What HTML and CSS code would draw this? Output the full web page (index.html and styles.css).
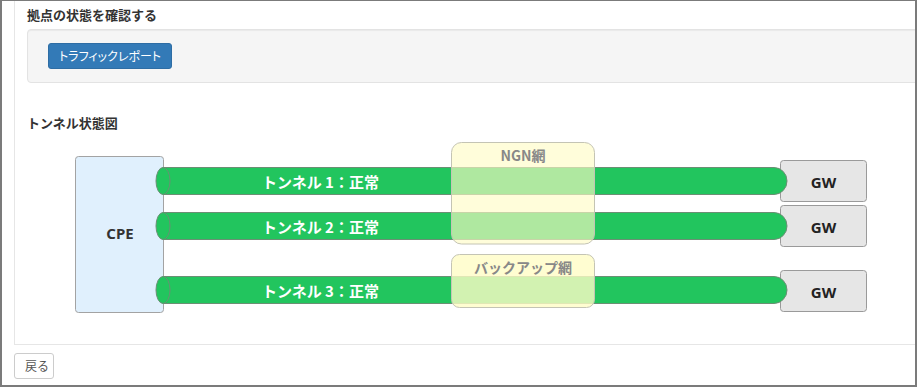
FILE: index.html
```html
<!DOCTYPE html>
<html lang="ja">
<head>
<meta charset="utf-8">
<title>拠点の状態を確認する</title>
<link rel="stylesheet" href="styles.css">
</head>
<body>
<div class="frame">
  <div class="panel">
    <h2 class="title">拠点の状態を確認する</h2>
    <div class="well">
      <button class="btn btn-primary">トラフィックレポート</button>
    </div>
    <h2 class="title title-diagram">トンネル状態図</h2>
    <svg class="diagram" viewBox="27 133 880 211" width="880" height="211" xmlns="http://www.w3.org/2000/svg">
      <rect class="cpe" x="75.5" y="156.5" width="88" height="156" rx="3"/>
      <text class="node-label" x="120" y="233">CPE</text>

      <rect class="gw" x="780.5" y="160.5" width="86" height="41" rx="3"/>
      <text class="node-label gw-label" x="823.5" y="182">GW</text>
      <rect class="gw" x="780.5" y="205.5" width="86" height="41" rx="3"/>
      <text class="node-label gw-label" x="823.5" y="227">GW</text>
      <rect class="gw" x="780.5" y="270.5" width="86" height="41" rx="3"/>
      <text class="node-label gw-label" x="823.5" y="292">GW</text>

      <path class="tube" d="M163,167.5 H774 A13,13.5 0 0 1 774,194.5 H163 Z"/>
      <ellipse class="tube" cx="163" cy="181" rx="7" ry="13.5"/>
      <text class="tube-label" x="262" y="181">トンネル 1：正常</text>

      <path class="tube" d="M163,212.5 H774 A13,13.5 0 0 1 774,239.5 H163 Z"/>
      <ellipse class="tube" cx="163" cy="226" rx="7" ry="13.5"/>
      <text class="tube-label" x="262" y="226">トンネル 2：正常</text>

      <path class="tube" d="M163,276.5 H774 A13,13.5 0 0 1 774,303.5 H163 Z"/>
      <ellipse class="tube" cx="163" cy="290" rx="7" ry="13.5"/>
      <text class="tube-label" x="262" y="290">トンネル 3：正常</text>

      <rect class="net net-ngn" x="451.5" y="142.5" width="143" height="101.5" rx="10"/>
      <text class="net-label" x="523" y="155">NGN網</text>
      <rect class="net net-backup" x="451.5" y="254.5" width="143" height="53" rx="8"/>
      <text class="net-label" x="523" y="267">バックアップ網</text>
    </svg>
  </div>
  <button class="btn btn-default back">戻る</button>
</div>
</body>
</html>
```

FILE: styles.css
```css
* { box-sizing: border-box; }
html, body { margin: 0; padding: 0; background: #fff; }
body {
  font-family: "Noto Sans CJK JP", "Noto Sans", sans-serif;
  color: #333;
  overflow: hidden;
}
.frame {
  width: 917px;
  height: 387px;
  border-style: solid;
  border-color: #7b7b7b;
  border-width: 1px 2px 2px 2px;
  overflow: hidden;
  padding-left: 12px;
}
.panel {
  margin-right: -40px;
  height: 344px;
  border: 1px solid #e6e6e6;
  border-top: none;
  padding: 0 12px;
}
.title {
  margin: 0 0 4px 0;
  padding-top: 4px;
  font-size: 13px;
  line-height: 20px;
  font-weight: bold;
  color: #333;
}
.title-diagram {
  margin: 30px 0 0 0;
  padding-top: 0;
}
.well {
  height: 54px;
  padding: 13px 20px;
  background: #f5f5f5;
  border: 1px solid #e3e3e3;
  border-radius: 4px;
  box-shadow: inset 0 1px 1px rgba(0, 0, 0, 0.05);
}
.btn {
  display: block;
  height: 26px;
  padding: 0 10px;
  font-family: "Noto Sans CJK JP", "Noto Sans", sans-serif;
  font-size: 12px;
  line-height: 24px;
  border-radius: 3px;
  text-align: center;
  white-space: nowrap;
}
.btn-primary {
  width: 124px;
  background: #337ab7;
  border: 1px solid #2e6da4;
  color: #fff;
  font-feature-settings: "palt";
}
.btn-default {
  background: #fff;
  border: 1px solid #ccc;
  color: #555;
}
.back {
  margin-top: 8px;
  width: 40px;
}
.diagram { display: block; }
.cpe { fill: #e0f0fd; stroke: #a3a3a3; stroke-width: 1; }
.gw { fill: #e6e6e6; stroke: #9a9a9a; stroke-width: 1; }
.node-label {
  font-family: "Noto Sans", "Open Sans", sans-serif;
  font-weight: bold;
  font-size: 15px;
  fill: #333;
  text-anchor: middle;
  dominant-baseline: central;
}
.gw-label { fill: #222; }
.tube { fill: #22c55e; stroke: #6b8f74; stroke-width: 1; }
.tube-label {
  font-family: "Noto Sans CJK JP", "Noto Sans", sans-serif;
  font-weight: bold;
  font-size: 15px;
  fill: #fff;
  dominant-baseline: central;
}
.net { stroke: #c4c4b4; stroke-width: 1; }
.net-ngn { fill: rgba(255, 252, 197, 0.64); }
.net-backup { fill: rgba(255, 252, 197, 0.8); }
.net-label {
  font-family: "Noto Sans CJK JP", "Noto Sans", sans-serif;
  font-weight: bold;
  font-size: 14px;
  fill: #888;
  text-anchor: middle;
  dominant-baseline: central;
}
```
